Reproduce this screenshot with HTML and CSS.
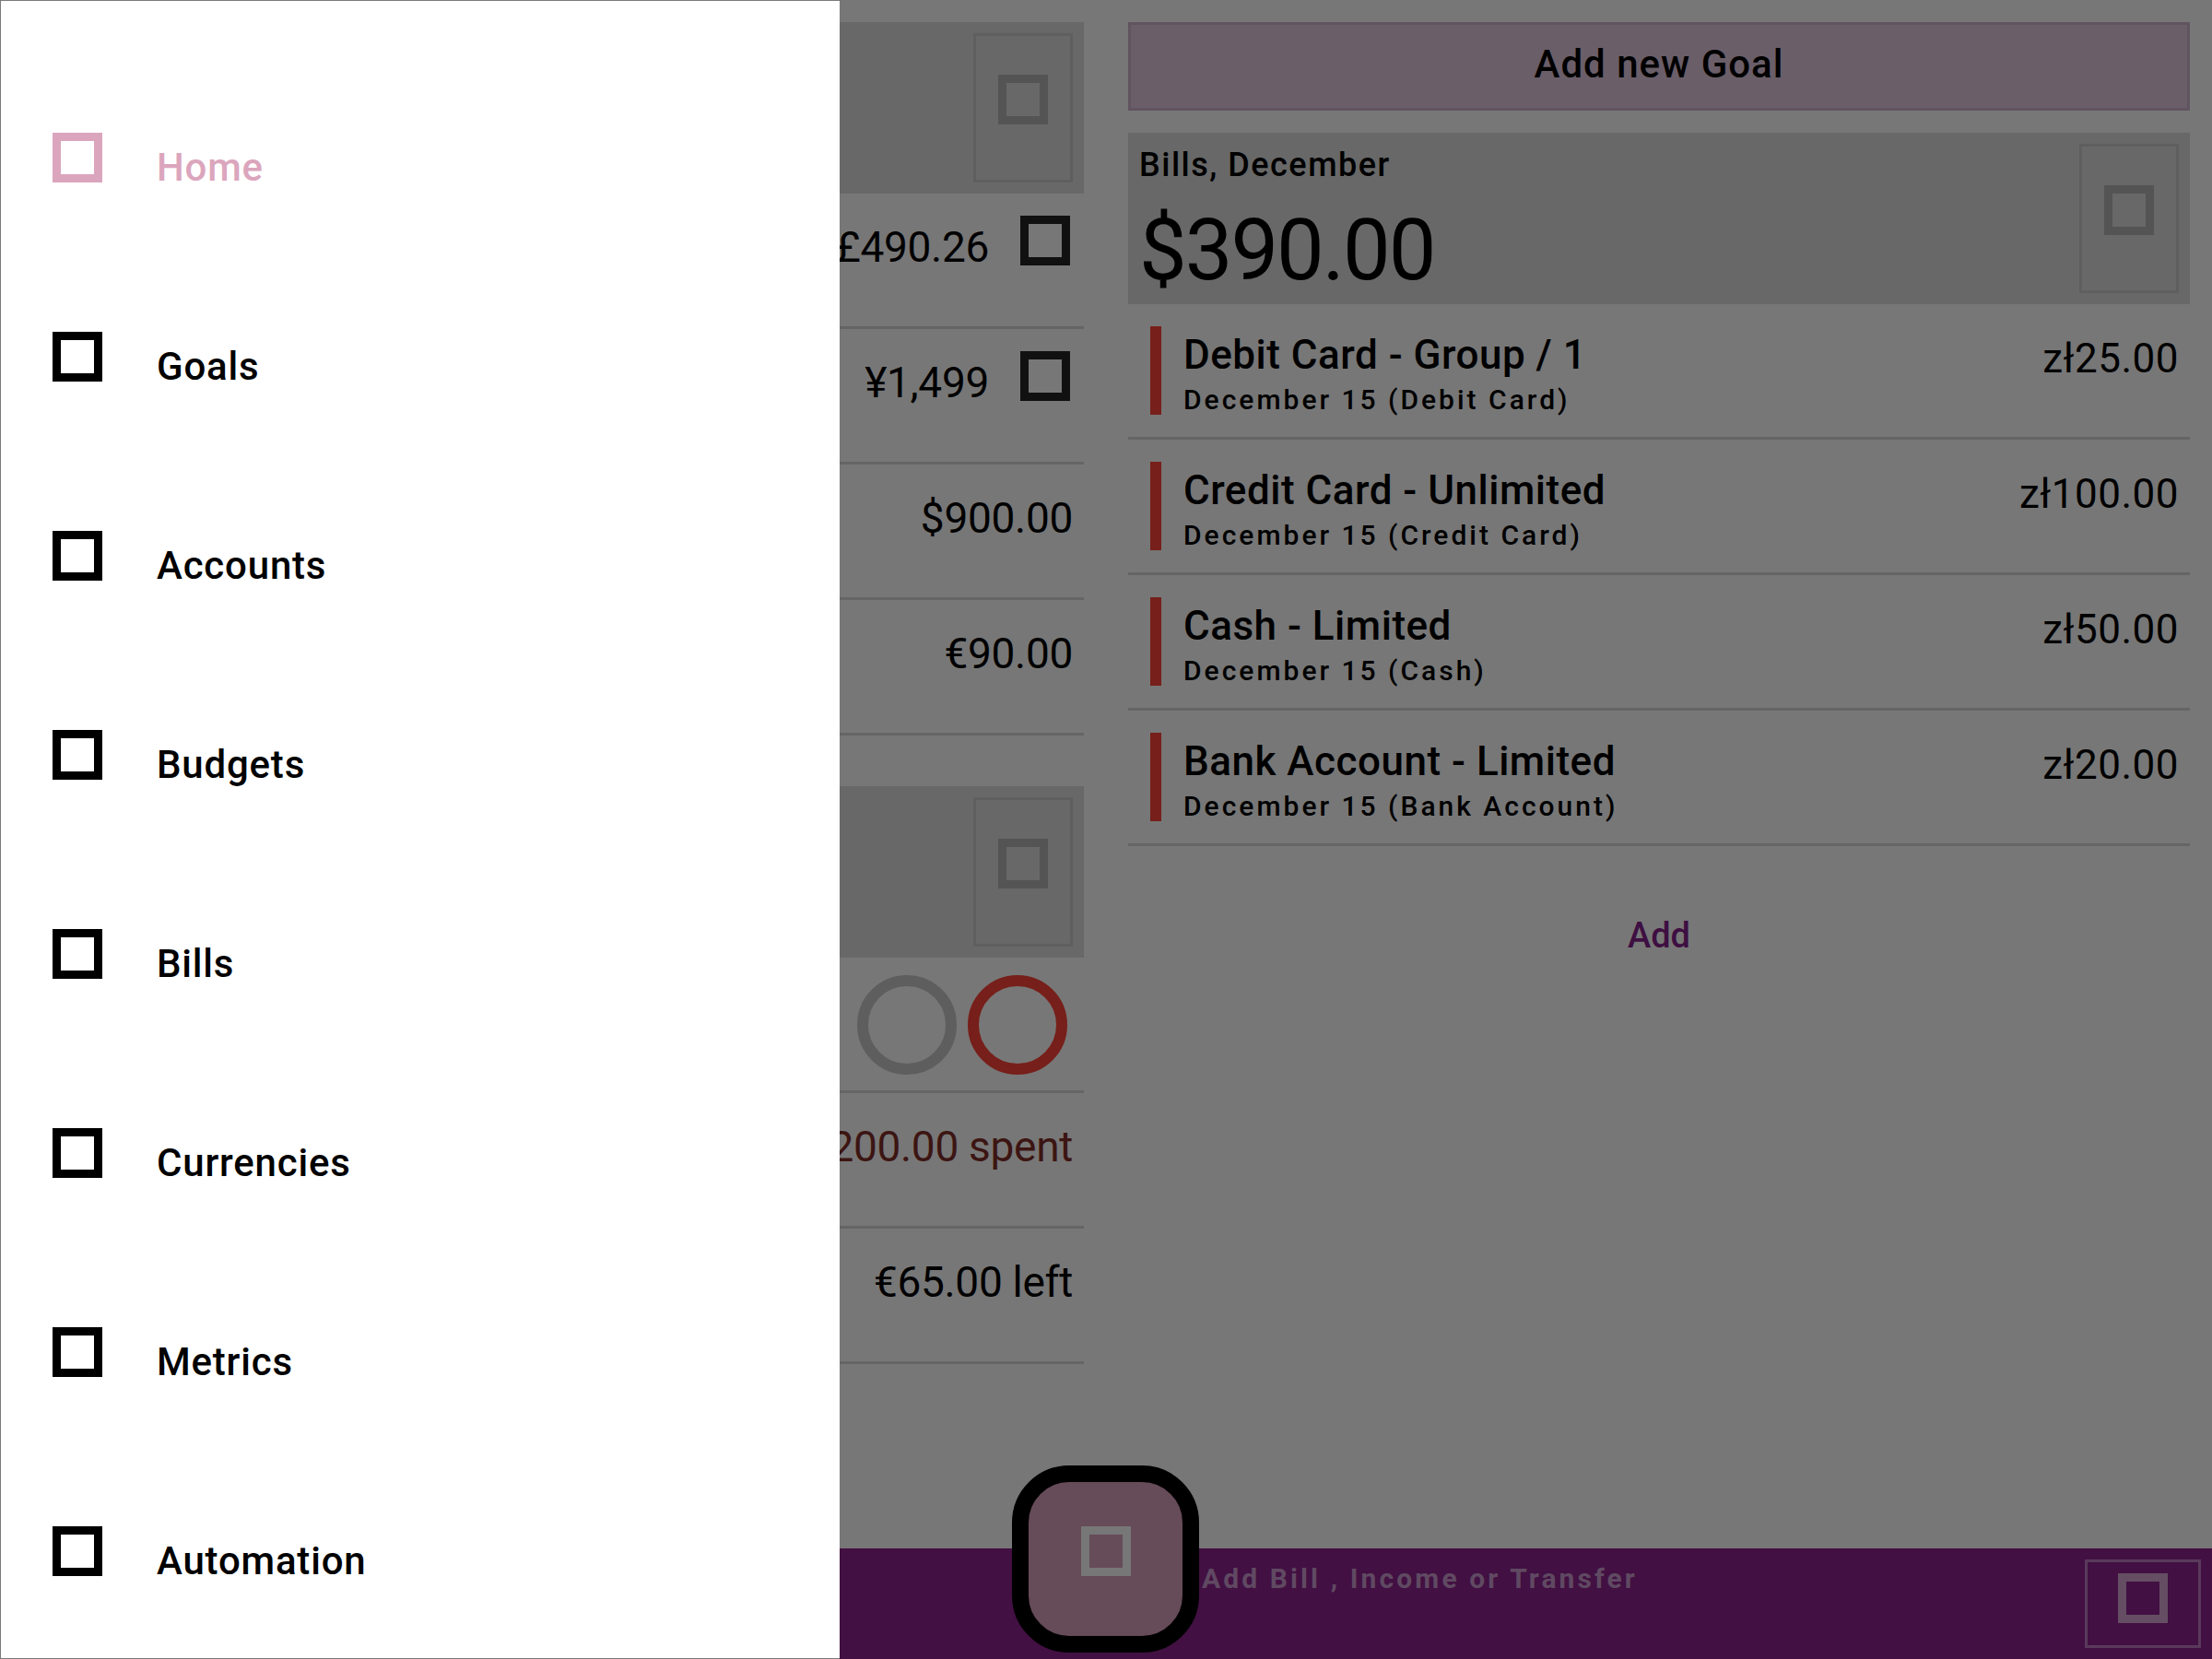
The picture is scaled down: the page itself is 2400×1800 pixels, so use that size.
FILE: index.html
```html
<!DOCTYPE html>
<html lang="en">
<head>
<meta charset="utf-8">
<title>Budget</title>
<link rel="stylesheet" href="styles.css">
</head>
<body>
<div class="app">
  <main class="content">
    <section class="col col-left">
      <div class="card"><div class="icon-box"><i class="tofu tofu-dim"></i></div></div>
      <div class="vrow"><span class="amount">£490.26</span><i class="tofu tofu-dark"></i></div>
      <div class="vrow"><span class="amount">¥1,499</span><i class="tofu tofu-dark"></i></div>
      <div class="vrow"><span class="amount">$900.00</span></div>
      <div class="vrow"><span class="amount">€90.00</span></div>
      <div class="card card-gap"><div class="icon-box"><i class="tofu tofu-dim"></i></div></div>
      <div class="vrow circles-row">
        <span class="ring ring-gray"></span>
        <span class="ring ring-red"></span>
      </div>
      <div class="vrow"><span class="amount spent">€200.00 spent</span></div>
      <div class="vrow"><span class="amount">€65.00 left</span></div>
    </section>

    <section class="col col-right">
      <button class="goal-btn">Add new Goal</button>
      <div class="bills-card">
        <div class="bills-text">
          <div class="bills-title">Bills, December</div>
          <div class="bills-total">$390.00</div>
        </div>
        <div class="icon-box"><i class="tofu tofu-dim"></i></div>
      </div>
      <div class="bill">
        <span class="bill-bar"></span>
        <div class="bill-info">
          <div class="bill-title">Debit Card - Group / 1</div>
          <div class="bill-sub">December 15 (Debit Card)</div>
        </div>
        <span class="bill-amount">zł25.00</span>
      </div>
      <div class="bill">
        <span class="bill-bar"></span>
        <div class="bill-info">
          <div class="bill-title">Credit Card - Unlimited</div>
          <div class="bill-sub">December 15 (Credit Card)</div>
        </div>
        <span class="bill-amount">zł100.00</span>
      </div>
      <div class="bill">
        <span class="bill-bar"></span>
        <div class="bill-info">
          <div class="bill-title">Cash - Limited</div>
          <div class="bill-sub">December 15 (Cash)</div>
        </div>
        <span class="bill-amount">zł50.00</span>
      </div>
      <div class="bill">
        <span class="bill-bar"></span>
        <div class="bill-info">
          <div class="bill-title">Bank Account - Limited</div>
          <div class="bill-sub">December 15 (Bank Account)</div>
        </div>
        <span class="bill-amount">zł20.00</span>
      </div>
      <div class="add-link">Add</div>
    </section>
  </main>

  <footer class="bottom-bar">
    <div class="bar-slot"></div>
    <div class="bar-center"></div>
    <div class="bar-end">
      <span class="bar-text">Add Bill , Income or Transfer</span>
      <div class="bar-action"><i class="tofu tofu-bar"></i></div>
    </div>
  </footer>

  <button class="fab"><i class="tofu tofu-fab"></i></button>
</div>

<nav class="drawer">
  <ul class="menu">
    <li class="menu-item active"><i class="tofu menu-icon"></i><span class="menu-label">Home</span></li>
    <li class="menu-item"><i class="tofu menu-icon"></i><span class="menu-label">Goals</span></li>
    <li class="menu-item"><i class="tofu menu-icon"></i><span class="menu-label">Accounts</span></li>
    <li class="menu-item"><i class="tofu menu-icon"></i><span class="menu-label">Budgets</span></li>
    <li class="menu-item"><i class="tofu menu-icon"></i><span class="menu-label">Bills</span></li>
    <li class="menu-item"><i class="tofu menu-icon"></i><span class="menu-label">Currencies</span></li>
    <li class="menu-item"><i class="tofu menu-icon"></i><span class="menu-label">Metrics</span></li>
    <li class="menu-item"><i class="tofu menu-icon"></i><span class="menu-label">Automation</span></li>
  </ul>
</nav>
</body>
</html>
```

FILE: styles.css
```css
* { box-sizing: border-box; }

html, body {
  margin: 0;
  padding: 0;
}

body {
  width: 2400px;
  height: 1800px;
  overflow: hidden;
  position: relative;
  background: #777777;
  font-family: Roboto, "Liberation Sans", sans-serif;
  color: #000;
}

.app {
  width: 2400px;
  height: 1800px;
  display: flex;
  flex-direction: column;
}

.content {
  flex: 1;
  display: flex;
  gap: 48px;
  padding: 24px 24px 0 24px;
}

.col {
  flex: 1;
  display: flex;
  flex-direction: column;
}

/* generic "missing icon" box */
.tofu {
  display: block;
  width: 54px;
  height: 54px;
  border: 9px solid #000;
  flex: none;
}
.tofu-dim { border-color: #545454; }
.tofu-dark { border-color: #111111; margin-right: 3px; }
.tofu-bar { border-color: #654e63; }
.tofu-fab { border-color: #777777; }

/* left column */
.card {
  height: 186px;
  background: #686868;
  padding: 12px;
  display: flex;
  justify-content: flex-end;
}
.card-gap { margin-top: 55px; }

.icon-box {
  width: 108px;
  height: 162px;
  border: 3px solid #5f5f5f;
  display: flex;
  justify-content: center;
  align-items: flex-start;
  padding-top: 42px;
  flex: none;
}

.vrow {
  height: 147px;
  border-bottom: 3px solid #656565;
  display: flex;
  justify-content: flex-end;
  align-items: flex-start;
  gap: 34px;
  padding: 24px 12px 0 0;
}

.amount {
  font-size: 46px;
  line-height: 69px;
  font-weight: 400;
  letter-spacing: -0.3px;
  white-space: nowrap;
}
.spent { color: #3c1512; }

.circles-row {
  gap: 12px;
  padding: 19px 18px 0 0;
}
.ring {
  width: 108px;
  height: 108px;
  border-radius: 50%;
  border: 12px solid #5e5e5e;
}
.ring-red { border-color: #771f1a; }

/* right column */
.goal-btn {
  height: 96px;
  margin: 0 0 24px 0;
  border: 3px solid #615460;
  background: #6a5e69;
  font-family: Roboto, "Liberation Sans", sans-serif;
  font-size: 42px;
  font-weight: 500;
  letter-spacing: 1px;
  color: #000;
  padding: 0 0 5px 0;
}

.bills-card {
  height: 186px;
  background: #686868;
  padding: 12px 12px 12px 12px;
  display: flex;
  justify-content: space-between;
}
.bills-title {
  font-size: 36px;
  line-height: 47px;
  font-weight: 500;
  letter-spacing: 1.5px;
}
.bills-total {
  font-size: 92px;
  line-height: 112px;
  margin-top: 13px;
  font-weight: 400;
  letter-spacing: -2px;
}

.bill {
  height: 147px;
  border-bottom: 3px solid #656565;
  display: flex;
  align-items: flex-start;
  padding: 24px 12px 0 24px;
}
.bill-bar {
  width: 12px;
  height: 96px;
  background: #771f1a;
  flex: none;
}
.bill-info {
  flex: 1;
  margin-left: 24px;
}
.bill-title {
  font-size: 44px;
  line-height: 62px;
  font-weight: 500;
  letter-spacing: 0.5px;
}
.bill-sub {
  font-size: 30px;
  line-height: 36px;
  font-weight: 500;
  letter-spacing: 3px;
}
.bill-amount {
  font-size: 44px;
  line-height: 70px;
  font-weight: 400;
  letter-spacing: 0.5px;
}

.add-link {
  margin-top: 49px;
  height: 96px;
  display: flex;
  align-items: center;
  justify-content: center;
  font-size: 38px;
  font-weight: 500;
  color: #3e0f42;
}

/* bottom bar */
.bottom-bar {
  height: 120px;
  flex: none;
  background: #421042;
  display: grid;
  grid-template-columns: 1fr 208px 1fr;
}
.bar-end {
  display: flex;
  justify-content: space-between;
  align-items: flex-start;
  padding: 12px 12px 12px 0;
}
.bar-text {
  padding-top: 3px;
  font-size: 30px;
  font-weight: 700;
  letter-spacing: 3.1px;
  color: #604962;
  white-space: nowrap;
}
.bar-action {
  width: 126px;
  height: 96px;
  border: 3px solid #5a3a5b;
  display: flex;
  align-items: center;
  justify-content: center;
  padding-bottom: 12px;
}

/* floating action button */
.fab {
  position: absolute;
  left: 1098px;
  top: 1590px;
  width: 203px;
  height: 203px;
  border: 18px solid #000;
  border-radius: 62px;
  background: #664b58;
  display: flex;
  align-items: center;
  justify-content: center;
  padding: 0 0 17px 0;
}

/* navigation drawer */
.drawer {
  position: absolute;
  left: 0;
  top: 0;
  width: 911px;
  height: 1800px;
  background: #fff;
  border: 1px solid #7a7a7a;
  border-right: none;
}
.menu {
  list-style: none;
  margin: 0;
  padding: 62px 0 0 0;
}
.menu-item {
  height: 216px;
  display: flex;
  align-items: center;
  padding-left: 56px;
}
.menu-label {
  margin-left: 59px;
  padding-top: 21px;
  font-size: 42px;
  font-weight: 500;
  letter-spacing: 0.8px;
}
.menu-item.active .menu-icon { border-color: #dba6bd; }
.menu-item.active .menu-label { color: #dba6bd; }
```
